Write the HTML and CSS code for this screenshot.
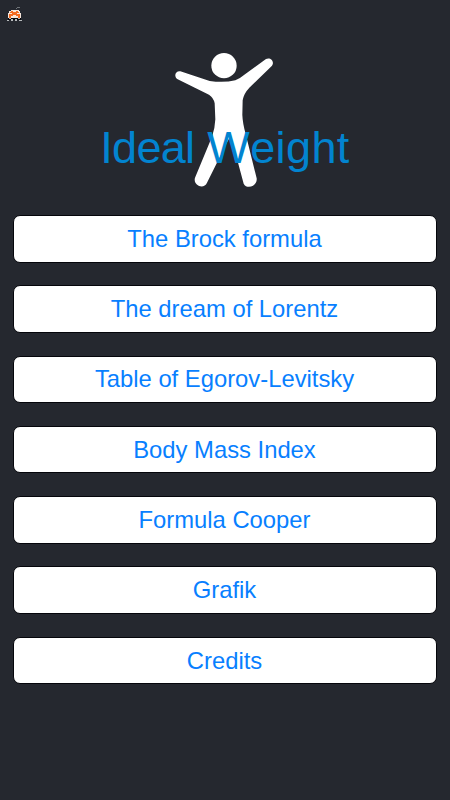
FILE: index.html
```html
<!DOCTYPE html>
<html lang="en">
<head>
  <meta charset="UTF-8">
  <meta name="viewport" content="width=device-width, initial-scale=1">
  <title>Ideal Weight</title>
  <link rel="stylesheet" href="styles.css">
</head>
<body>
  <div class="status">
    <svg class="bug" viewBox="0 0 16 16">
      <path fill="#6f7478" d="M10 0h3v1h-3zM9 1h1v1H9z"/>
      <path fill="#f4e4da" d="M4 3h8v1h1v2h1v5H1V6h1V4h2z"/>
      <path fill="#f26a21" d="M4 4h2v1h3V4h2v1h1v1h-2v1h3v4h-2V9H9V8H6v1H4v2H2V7h3V6H3V5h1z"/>
      <path fill="#080a0e" d="M1 11h13v2H1z"/>
      <path fill="#b9bcbe" d="M2 11h2v1H2zM11 11h2v1h-2zM0 13h2v1H0zM4 12h2v2H4zM8 12h2v2H8zM12 13h3v1h-3z"/>
    </svg>
  </div>

  <header class="logo">
    <svg class="man" viewBox="0 0 360 465">
      <circle cx="177" cy="77" r="38"/>
      <path d="M46 94 L134 123 Q177 129 211 121 Q224 116 238 104 L303 57 C316 50 330 65 321 77 L253 143 Q236 161 233 181 L232 225 Q233 250 242 282 L275 415 C278 438 246 450 236 431 L197 286 L126 428 C117 450 83 437 90 413 L141 290 Q150 265 151 238 L149 190 Q146 173 132 164 L38 118 C25 109 31 92 46 94 Z"/>
    </svg>
    <h1><span class="tight">Ideal</span> Weight</h1>
  </header>

  <nav class="menu">
    <button>The Brock formula</button>
    <button>The dream of Lorentz</button>
    <button>Table of Egorov-Levitsky</button>
    <button>Body Mass Index</button>
    <button>Formula Cooper</button>
    <button>Grafik</button>
    <button>Credits</button>
  </nav>
</body>
</html>
```

FILE: styles.css
```css
* {
  box-sizing: border-box;
}

body {
  margin: 0;
  height: 800px;
  background: #25282f;
  font-family: "Liberation Sans", Arial, sans-serif;
  overflow: hidden;
}

.status {
  height: 40px;
  padding: 7px 0 0 7px;
}

.bug {
  display: block;
  width: 16px;
  height: 16px;
}

/* title is drawn over the figure */
.logo {
  display: grid;
  height: 175px;
  justify-items: center;
  align-items: start;
}

.man {
  grid-area: 1 / 1;
  width: 120px;
  height: 155px;
  fill: #fff;
}

.logo h1 {
  grid-area: 1 / 1;
  margin: 82px 0 0;
  font-size: 45px;
  font-weight: normal;
  font-kerning: none;
  line-height: 52px;
  letter-spacing: 0.4px;
  color: #0284d0;
  z-index: 1;
}

.logo .tight {
  letter-spacing: -0.7px;
}

.menu {
  display: flex;
  flex-direction: column;
  gap: 22.8px;
  padding: 0 13px;
}

.menu button {
  height: 47.5px;
  padding: 0 1px 0 0;
  border: 1px solid #05060b;
  border-radius: 7px;
  background: #fff;
  color: #087fff;
  font-family: inherit;
  font-size: 23.8px;
}
```
